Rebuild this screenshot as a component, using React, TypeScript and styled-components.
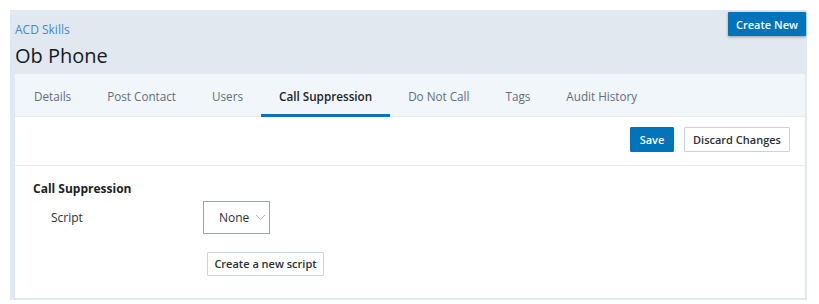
import React from 'react';
import styled, { createGlobalStyle } from 'styled-components';

const GlobalStyle = createGlobalStyle`
  body {
    margin: 0;
    background: #ffffff;
    font-family: "Open Sans", "Liberation Sans", sans-serif;
  }
`;

const Page = styled.div`
  padding: 10px 12px 4px 10px;
`;

const Shell = styled.div`
  background: #e1e8f0;
  padding: 0 2px 2px 5px;
  height: 290px;
  box-sizing: border-box;
  display: flex;
  flex-direction: column;
`;

const Header = styled.div`
  position: relative;
  height: 64px;
  padding-top: 12px;
  box-sizing: border-box;
`;

const Crumb = styled.a`
  display: block;
  font-size: 12px;
  line-height: 16px;
  color: #3d8bc9;
  text-decoration: none;
`;

const Title = styled.h1`
  margin: 5px 0 0;
  font-size: 20px;
  font-weight: 400;
  line-height: 26px;
  color: #161a1e;
`;

const CreateButton = styled.button`
  position: absolute;
  top: 2px;
  right: -1px;
  width: 78px;
  height: 24px;
  border: none;
  border-radius: 1px;
  background: #0074bb;
  color: #fff;
  font-family: inherit;
  font-size: 11px;
  font-weight: 600;
  box-shadow: 0 1px 3px rgba(0, 0, 0, 0.35);
`;

const Panel = styled.div`
  flex: 1;
  background: #ffffff;
  display: flex;
  flex-direction: column;
`;

const TabBar = styled.div`
  display: flex;
  height: 42px;
  padding-left: 1px;
  background: #f1f6fa;
  border-bottom: 1px solid #e6ebf0;
`;

const Tab = styled.div<{ $active?: boolean }>`
  display: flex;
  align-items: center;
  padding: 3px 18px 0;
  font-size: 11.7px;
  color: ${p => (p.$active ? '#1c232b' : '#5f6f7e')};
  font-weight: ${p => (p.$active ? 600 : 400)};
  border-bottom: 3px solid ${p => (p.$active ? '#0a74ba' : 'transparent')};
  margin-bottom: -1px;
`;

const Toolbar = styled.div`
  display: flex;
  justify-content: flex-end;
  align-items: center;
  gap: 10px;
  height: 49px;
  box-sizing: border-box;
  padding: 0 15px 4px 0;
  border-bottom: 1px solid #e6ebf0;
`;

const Button = styled.button<{ $primary?: boolean; $w: number }>`
  width: ${p => p.$w}px;
  height: 25px;
  padding: 0;
  font-family: inherit;
  font-size: 11px;
  font-weight: 600;
  border-radius: 1px;
  border: 1px solid ${p => (p.$primary ? '#0074bb' : '#c9d1da')};
  background: ${p => (p.$primary ? '#0074bb' : '#ffffff')};
  color: ${p => (p.$primary ? '#ffffff' : '#2b2f33')};
`;

const Section = styled.div`
  padding: 15px 18px;
`;

const SectionTitle = styled.div`
  font-size: 12px;
  font-weight: 700;
  color: #1c1f22;
  line-height: 16px;
`;

const Row = styled.div`
  display: grid;
  grid-template-columns: 152px auto;
  align-items: center;
  margin-top: 4px;
  padding-left: 18px;
`;

const Label = styled.div`
  font-size: 12px;
  color: #2d3136;
`;

const Select = styled.div`
  width: 67px;
  height: 33px;
  box-sizing: border-box;
  border: 1px solid #9aa5b1;
  display: flex;
  align-items: center;
  padding-left: 15px;
  gap: 6px;
  font-size: 12px;
  color: #2d3136;
`;

const Actions = styled.div`
  margin: 17px 0 0 174px;
`;

const SecondaryButton = styled.button`
  width: 117px;
  height: 24px;
  font-family: inherit;
  font-size: 11px;
  font-weight: 600;
  color: #2b2f33;
  background: #fff;
  border: 1px solid #c9d1da;
  border-radius: 1px;
`;

const tabs = ['Details', 'Post Contact', 'Users', 'Call Suppression', 'Do Not Call', 'Tags', 'Audit History'];

const App = () => {
  return (
    <Page>
      <GlobalStyle />
      <Shell>
        <Header>
          <Crumb href="#">ACD Skills</Crumb>
          <Title>Ob Phone</Title>
          <CreateButton>Create New</CreateButton>
        </Header>
        <Panel>
          <TabBar>
            {tabs.map(t => (
              <Tab key={t} $active={t === 'Call Suppression'}>{t}</Tab>
            ))}
          </TabBar>
          <Toolbar>
            <Button $primary $w={44}>Save</Button>
            <Button $w={106}>Discard Changes</Button>
          </Toolbar>
          <Section>
            <SectionTitle>Call Suppression</SectionTitle>
            <Row>
              <Label>Script</Label>
              <Select>
                None
                <svg width="11" height="7" viewBox="0 0 11 7">
                  <path d="M1 1l4.5 4.5L10 1" fill="none" stroke="#a6b0ba" strokeWidth="1" />
                </svg>
              </Select>
            </Row>
            <Actions>
              <SecondaryButton>Create a new script</SecondaryButton>
            </Actions>
          </Section>
        </Panel>
      </Shell>
    </Page>
  );
};

export default App;
